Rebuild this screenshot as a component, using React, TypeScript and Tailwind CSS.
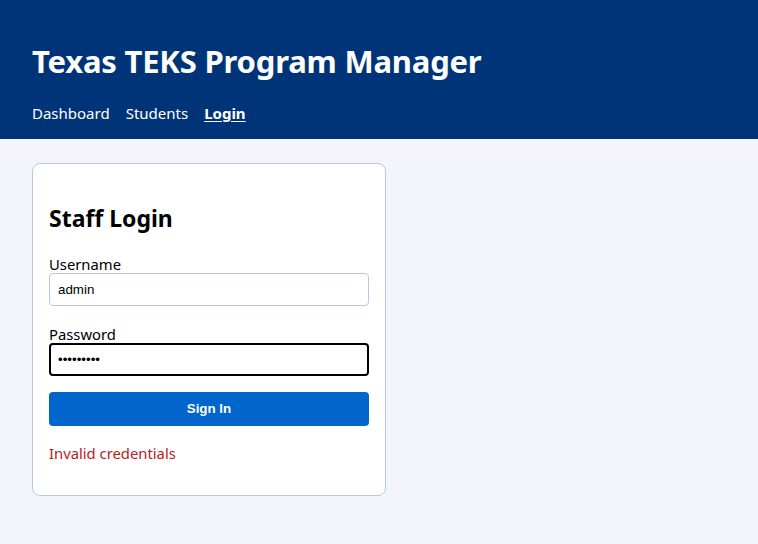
import React from "react";

export default function App() {
  const font = { fontFamily: '"Noto Sans", "Open Sans", sans-serif' };
  return (
    <div className="min-h-[544px] bg-[#f4f5fa] text-black" style={font}>
      <header className="bg-[#003478] px-8 pt-[42px] pb-[14px] text-white">
        <h1 className="m-0 text-[31px] font-bold leading-[38px] tracking-[-0.2px]">Texas TEKS Program Manager</h1>
        <nav className="mt-[21px] flex gap-4 text-[15px] leading-6">
          <a className="text-white">Dashboard</a>
          <a className="text-white">Students</a>
          <a className="font-bold text-white underline underline-offset-2">Login</a>
        </nav>
      </header>
      <main className="px-8 pt-6">
        <div className="w-[354px] rounded-lg border border-[#b8c8e4] bg-white px-4 pt-4 pb-[31px]">
          <h2 className="mt-[24px] mb-[23px] text-[23px] font-bold leading-[29px]">Staff Login</h2>
          <label className="block text-[14.8px] leading-[17px]">Username</label>
          <input
            readOnly
            value="admin"
            className="box-border h-[33px] w-full rounded border border-[#b8c8e4] px-2 text-[13.33px] outline-none"
            style={{ fontFamily: '"Liberation Sans", Arial, sans-serif' }}
          />
          <label className="mt-[20px] block text-[14.8px] leading-[17px]">Password</label>
          <input
            readOnly
            type="password"
            value="123456789"
            className="box-border h-[33px] w-full rounded border-2 border-black px-[7px] text-[13.33px] outline-none"
            style={{ fontFamily: '"Liberation Sans", Arial, sans-serif' }}
          />
          <button
            className="mt-4 block h-[34px] w-full rounded bg-[#0066cc] text-[13.33px] font-bold text-white"
            style={{ fontFamily: '"Liberation Sans", Arial, sans-serif' }}
          >
            Sign In
          </button>
          <p className="mt-4 text-[14.8px] leading-[22px] text-[#b81c1c]">Invalid credentials</p>
        </div>
      </main>
    </div>
  );
}
